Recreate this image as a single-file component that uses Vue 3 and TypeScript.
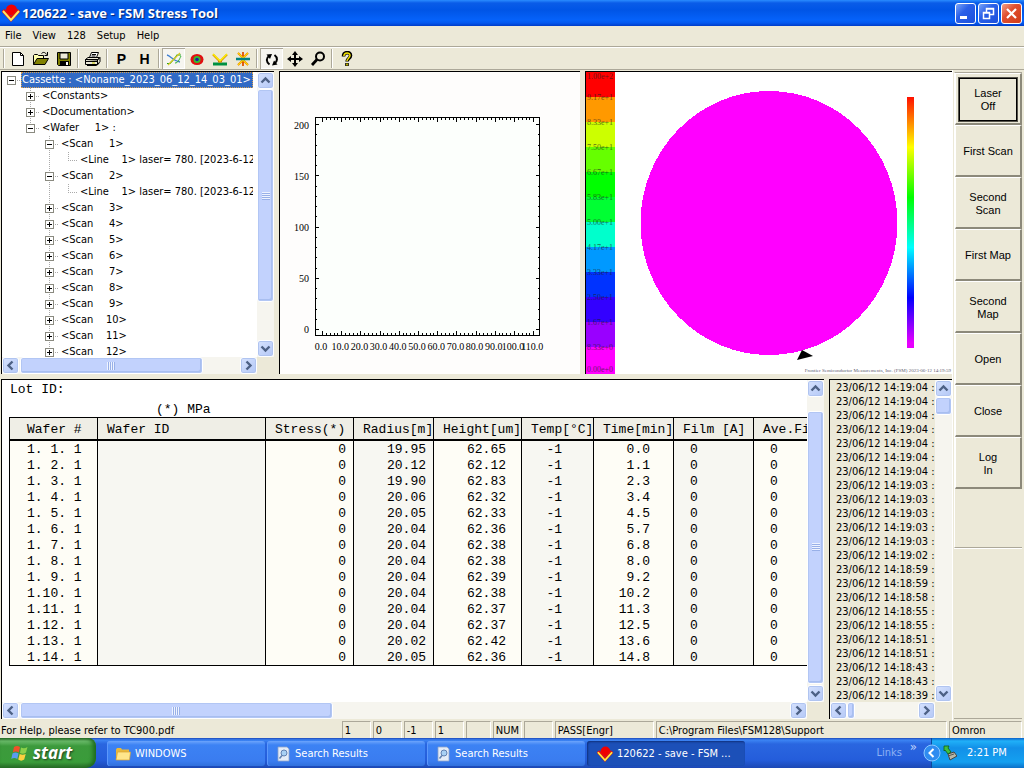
<script setup lang="ts">
import { h } from 'vue'

interface TreeRow { text: string; depth: number; box: '' | '+' | '-'; lines: string[] }
interface BarProps { dir: 'v' | 'h'; before: number; thumb: number; after: number; grip?: boolean; name: string }

const ScrollBar = (p: BarProps) => {
  const arrow = (d: string, label: string) =>
    h('button', { class: 'sb-btn', type: 'button', 'aria-label': `${p.name} ${label}` }, [
      h('svg', { viewBox: '0 0 15 15', width: 15, height: 15 }, [
        h('path', { d, fill: 'none', stroke: '#4d6185', 'stroke-width': 2.4 }),
      ]),
    ])
  const v = p.dir === 'v'
  return h('div', { class: ['sb', `sb-${p.dir}`] }, [
    arrow(v ? 'M3.5 9.5 7.5 5.5 11.5 9.5' : 'M9.5 3.5 5.5 7.5 9.5 11.5', v ? 'up' : 'left'),
    h('div', { class: 'sb-track' }, [
      h('span', { style: { flexGrow: p.before } }),
      h('span', { class: 'sb-thumb', style: { flexGrow: p.thumb } }, p.grip ? [h('i', { class: 'sb-grip' })] : []),
      h('span', { style: { flexGrow: p.after } }),
    ]),
    arrow(v ? 'M3.5 5.5 7.5 9.5 11.5 5.5' : 'M5.5 3.5 9.5 7.5 5.5 11.5', v ? 'down' : 'right'),
  ])
}
ScrollBar.props = ['dir', 'before', 'thumb', 'after', 'grip', 'name']

const menus = ['File', 'View', '128', 'Setup', 'Help']

const scanRow = (n: number, box: '+' | '-'): TreeRow => ({
  text: `<Scan    ${n < 10 ? ' ' : ''}${n}>`, depth: 2, box, lines: ['', '', 'full stub'],
})
const lineRow: TreeRow = {
  text: '<Line    1> laser= 780. [2023-6-12', depth: 3, box: '', lines: ['', '', 'full', 'half stub'],
}
const tree: TreeRow[] = [
  { text: 'Cassette : <Noname_2023_06_12_14_03_01>', depth: 0, box: '-', lines: ['stub'] },
  { text: '<Constants>', depth: 1, box: '+', lines: ['', 'full stub'] },
  { text: '<Documentation>', depth: 1, box: '+', lines: ['', 'full stub'] },
  { text: '<Wafer     1> :', depth: 1, box: '-', lines: ['', 'half stub'] },
  scanRow(1, '-'), lineRow, scanRow(2, '-'), lineRow,
  ...[3, 4, 5, 6, 7, 8, 9, 10, 11, 12].map((n) => scanRow(n, '+')),
]

const xLabels = Array.from({ length: 12 }, (_, i) => (i * 10).toFixed(1))
const xTicks = Array.from({ length: 56 }, (_, i) => ({ x: Math.round(42 + i * 3.84) + 0.5, len: i % 5 ? 3 : 5 }))
const yTicks = Array.from({ length: 21 }, (_, i) => ({ y: Math.round(257 - i * 10.25) + 0.5, len: i % 5 ? 2 : 4 }))
const yLabels = [0, 50, 100, 150, 200]

const bands = [
  ['#ff0000', '1.00e+2'], ['#ff9900', '9.17e+1'], ['#ccff00', '8.33e+1'], ['#66ff00', '7.50e+1'],
  ['#00ff00', '6.67e+1'], ['#00ff33', '5.83e+1'], ['#00ffcc', '5.00e+1'], ['#0099ff', '4.17e+1'],
  ['#0033ff', '3.33e+1'], ['#3300ff', '2.50e+1'], ['#9900ff', '1.67e+1'], ['#ff00ff', '8.33e+0'],
]

const columns = [
  { label: 'Wafer #', cls: 'c-no' }, { label: 'Wafer ID', cls: 'c-id' }, { label: 'Stress(*)', cls: 'c-stress' },
  { label: 'Radius[m]', cls: 'c-radius' }, { label: 'Height[um]', cls: 'c-height' }, { label: 'Temp[°C]', cls: 'c-temp' },
  { label: 'Time[min]', cls: 'c-time' }, { label: 'Film [A]', cls: 'c-film' }, { label: 'Ave.Film', cls: 'c-ave' },
]
const measured: [string, string, string][] = [
  ['19.95', '62.65', '0.0'], ['20.12', '62.12', '1.1'], ['19.90', '62.83', '2.3'], ['20.06', '62.32', '3.4'],
  ['20.05', '62.33', '4.5'], ['20.04', '62.36', '5.7'], ['20.04', '62.38', '6.8'], ['20.04', '62.38', '8.0'],
  ['20.04', '62.39', '9.2'], ['20.04', '62.38', '10.2'], ['20.04', '62.37', '11.3'], ['20.04', '62.37', '12.5'],
  ['20.02', '62.42', '13.6'], ['20.05', '62.36', '14.8'],
]
const rows = measured.map(([r, ht, t], i) => [
  `1.${String(i + 1).padStart(2, ' ')}. 1`, '', '0', r, ht, '-1', t, '0', '0',
])

const log = [
  '19:04', '19:04', '19:04', '19:04', '19:04', '19:04', '19:04', '19:03', '19:03', '19:03', '19:03', '19:03',
  '19:02', '18:59', '18:59', '18:58', '18:55', '18:55', '18:51', '18:51', '18:43', '18:43', '18:39',
]

const actions = ['Laser\nOff', 'First Scan', 'Second\nScan', 'First Map', 'Second\nMap', 'Open', 'Close', 'Log\nIn']
</script>

<template>
  <div class="app">
    <header class="title">
      <svg class="logo" viewBox="0 0 18 18" width="18" height="18">
        <circle cx="9.500" cy="6" r="5.500" fill="#f00000" />
        <path d="M1 6 9 15 17 6" fill="none" stroke="#e01010" stroke-width="4" />
        <path d="M1 7 9 16 17 7" fill="none" stroke="#ffe860" stroke-width="2" />
      </svg>
      <h1>120622 - save - FSM Stress Tool</h1>
      <button class="win" aria-label="Minimize"><svg viewBox="0 0 19 19"><path d="M4 13.500h7" stroke="#fff" stroke-width="3" /></svg></button>
      <button class="win" aria-label="Restore"><svg viewBox="0 0 19 19"><path d="M7.500 8V4.500h7v6H11M7 5h8" fill="none" stroke="#fff" stroke-width="1.500" /><path d="M4.500 8.500h6v6h-6zM4 9h7" fill="none" stroke="#fff" stroke-width="1.500" /></svg></button>
      <button class="win close" aria-label="Close"><svg viewBox="0 0 19 19"><path d="M5 5 14 14M14 5 5 14" stroke="#fff" stroke-width="2.200" /></svg></button>
    </header>

    <nav class="menu"><button v-for="m in menus" :key="m">{{ m }}</button></nav>

    <div class="toolbar">
      <i class="sep lead"></i>
      <button aria-label="New"><svg viewBox="0 0 16 16"><path d="M2.500 1.500h8l3 3v10h-11z" fill="#fff" stroke="#000" /><path d="M10.500 1.500v3h3" fill="none" stroke="#000" /></svg></button>
      <button aria-label="Open file"><svg viewBox="0 0 16 16"><path d="M.5 13.500v-9l1-1h3l1 1h5v3" fill="#ffffb0" stroke="#000" /><path d="M.5 13.500 4 7.500h11.500l-3.500 6z" fill="#808000" stroke="#000" /><path d="M8.500 2.500c2-2 4-1 5 1M14.500 1v3.500h-3" fill="none" stroke="#000" /></svg></button>
      <button aria-label="Save"><svg viewBox="0 0 16 16"><path d="M1.500 1.500h13v13h-12l-1-1z" fill="#808000" stroke="#000" /><path d="M4 2h8v6H4z" fill="#ece9d8" stroke="#000" /><path d="M4 10h9v4.500H4z" fill="#000" /><path d="M10 11h2v3h-2z" fill="#fff" /></svg></button>
      <i class="sep"></i>
      <button aria-label="Print"><svg viewBox="0 0 16 16"><path d="M4.500 6.500 6.500 1.500h7l-2 5" fill="#fff" stroke="#000" /><path d="M7 3.500h4M6.500 5h4" stroke="#000" /><path d="M.5 8.500l2.500-2h11.500l-2 2.500zM.5 8.500h12v5H.5zM12.500 9l2.500-2.500v4l-2.500 3" fill="#ece9d8" stroke="#000" /><path d="M.5 10.500h12M2 14.500h9.500l3-2.500" fill="none" stroke="#000" /><path d="M7 12h3" stroke="#c8c800" /></svg></button>
      <i class="sep"></i>
      <button class="letter">P</button>
      <button class="letter">H</button>
      <i class="sep"></i>
      <button class="on" aria-label="Line plot"><svg viewBox="0 0 16 16"><path d="M1 12.500h3L9 7l2-3h4" fill="none" stroke="#20a020" stroke-width="1.200" /><path d="M1 4c4 1 6 6 13 7" fill="none" stroke="#4080d0" stroke-width="1.300" /><path d="M2 14 14 2" stroke="#d8c820" stroke-width="1.200" /><path d="M9 12c3 0 4-3 6-7" fill="none" stroke="#30b030" /></svg></button>
      <button aria-label="Contour map"><svg viewBox="0 0 16 16"><ellipse cx="8" cy="8.500" rx="6.500" ry="5.500" fill="#e01010" /><circle cx="8" cy="8.500" r="3.500" fill="#30c030" /><circle cx="8" cy="8.500" r="1.800" fill="#2020a0" /></svg></button>
      <button aria-label="Reflection"><svg viewBox="0 0 16 16"><path d="M1 13h14" stroke="#009040" stroke-width="3" /><path d="M1 3.500 8 10.500 15 3.500M6 10.500h4" fill="none" stroke="#d08000" stroke-width="2" /><path d="M1 3 8 10 15 3" fill="none" stroke="#fff000" stroke-width="1.500" /></svg></button>
      <button aria-label="Intensity"><svg viewBox="0 0 16 16"><path d="M8 1v14M3 2 8 7 13 2M3 14 8 9 13 14" fill="none" stroke="#e05000" stroke-width="1.800" /><path d="M3 2 8 7 13 2M3 14 8 9 13 14" fill="none" stroke="#ffe000" stroke-width="1.300" /><path d="M1 8h14" stroke="#008080" stroke-width="2.500" /></svg></button>
      <i class="sep"></i>
      <button class="on" aria-label="Rotate"><svg viewBox="0 0 16 16"><path d="M5.500 13.500C2 11 2 7 5 5M10.500 4c3.500 2.500 3 6.500 0 8.500" fill="none" stroke="#000" stroke-width="2" /><path d="M2.500 3.500 8 3 6 8zM13.500 13.500 8 14.500 10 9.500z" /></svg></button>
      <button aria-label="Move"><svg viewBox="0 0 16 16"><path d="M8 2v12M2 8h12" stroke="#000" stroke-width="2" /><path d="M8 0 11 4H5zM8 16 5 12h6zM0 8 4 5v6zM16 8 12 11V5z" /></svg></button>
      <button aria-label="Magnify"><svg viewBox="0 0 16 16"><circle cx="10" cy="5.500" r="4" fill="none" stroke="#000" stroke-width="2" /><path d="M7 8.500 2 14" stroke="#000" stroke-width="2.800" /></svg></button>
      <i class="sep"></i>
      <button aria-label="Help"><svg viewBox="0 0 16 16"><path d="M4.500 5.500c0-5 7-5 7-1 0 3-3.500 3-3.500 6M8 12v3" fill="none" stroke="#000" stroke-width="3.600" /><path d="M4.800 5c.5-4 6.200-4 6.200-.5 0 2.500-3 3-3 5.500M8 12.500v2" fill="none" stroke="#f0e000" stroke-width="1.500" /></svg></button>
    </div>

    <main class="main">
      <div class="workspace">
        <div class="upper">
          <section class="pane tree-pane">
            <ul class="tree">
              <li v-for="(r, i) in tree" :key="i">
                <span v-for="(l, k) in r.lines" :key="k" class="cell" :class="l">
                  <svg v-if="k === r.depth && r.box" viewBox="0 0 9 9" width="9" height="9">
                    <rect x=".5" y=".5" width="8" height="8" fill="#fff" stroke="#8a8a80" />
                    <path :d="r.box === '+' ? 'M2 4.5h5M4.5 2v5' : 'M2 4.5h5'" stroke="#000" />
                  </svg>
                </span>
                <span class="node" :class="{ sel: i === 0 }">{{ r.text }}</span>
              </li>
            </ul>
            <ScrollBar dir="v" name="Tree" :before="0" :thumb="214" :after="38" :grip="true" />
            <ScrollBar dir="h" name="Tree" :before="1" :thumb="184" :after="38" :grip="true" />
          </section>

          <section class="pane plot">
            <svg viewBox="0 0 300 302">
              <rect x="35.500" y="45.500" width="224" height="218" fill="#fcfffc" stroke="#000" />
              <path v-for="t in xTicks" :key="'x' + t.x" :d="`M${t.x} 45v${t.len}M${t.x} 264v-${t.len}`" stroke="#000" />
              <path v-for="t in yTicks" :key="'y' + t.y" :d="`M35 ${t.y}h${t.len}M260 ${t.y}h-${t.len}`" stroke="#000" />
              <text v-for="(v, i) in yLabels" :key="'l' + v" x="29" :y="261 - i * 51" text-anchor="end">{{ v }}</text>
              <text v-for="(v, i) in xLabels" :key="'b' + v" :x="41 + i * 19.2" y="278" text-anchor="middle">{{ v }}</text>
            </svg>
          </section>

          <section class="pane map">
            <svg viewBox="0 0 366 302" preserveAspectRatio="xMinYMin meet">
              <defs>
                <linearGradient id="spectrum" x1="0" y1="0" x2="0" y2="1">
                  <stop offset="0" stop-color="#ff1000" /><stop offset=".2" stop-color="#ffff00" />
                  <stop offset=".4" stop-color="#00ff00" /><stop offset=".6" stop-color="#00ffff" />
                  <stop offset=".8" stop-color="#0000ff" /><stop offset=".98" stop-color="#e800ff" />
                </linearGradient>
              </defs>
              <rect v-for="(b, i) in bands" :key="b[0]" x="0" :y="i * 25" width="29" :height="i === 11 ? 27 : 25" :fill="b[0]" />
              <text v-for="(b, i) in bands" :key="b[1]" class="scale" x="1" :y="i ? i * 25 + 3 : 7">{{ b[1] }}</text>
              <text class="scale" x="1" y="300">0.00e+0</text>
              <ellipse cx="183" cy="151" rx="128.500" ry="132" fill="#ff00ff" shape-rendering="crispEdges" />
              <rect x="321" y="25" width="7" height="251" fill="url(#spectrum)" />
              <path d="M211 288 216 278 227 284z" />
              <text class="credit" x="365" y="300" text-anchor="end">Frontier Semiconductor Measurements, Inc. (FSM) 2023-06-12 14:19:59</text>
            </svg>
          </section>
        </div>

        <div class="lower">
          <section class="pane results">
            <div class="sheet">
              <p>Lot ID:</p>
              <p class="unit">(*) MPa</p>
              <table>
                <colgroup><col v-for="c in columns" :key="c.cls" :class="c.cls" /></colgroup>
                <thead><tr><th v-for="c in columns" :key="c.cls" scope="col">{{ c.label }}</th></tr></thead>
                <tbody>
                  <tr v-for="(r, i) in rows" :key="i"><td v-for="(v, k) in r" :key="k" :class="columns[k].cls">{{ v }}</td></tr>
                </tbody>
              </table>
            </div>
            <ScrollBar dir="v" name="Results" :before="14" :thumb="274" :after="1" :grip="true" />
            <ScrollBar dir="h" name="Results" :before="1" :thumb="312" :after="459" :grip="true" />
          </section>

          <section class="pane log">
            <ol><li v-for="(t, i) in log" :key="i">23/06/12 14:{{ t }} :</li></ol>
            <ScrollBar dir="v" name="Log" :before="0" :thumb="16" :after="272" />
            <ScrollBar dir="h" name="Log" :before="0" :thumb="7" :after="68" />
          </section>
        </div>
      </div>

      <aside class="side">
        <div class="actions">
          <button v-for="(a, i) in actions" :key="a" :class="{ focus: i === 0 }"><span>{{ a }}</span></button>
        </div>
        <div class="blank"></div>
      </aside>
    </main>

    <footer class="status">
      <span class="hint">For Help, please refer to TC900.pdf</span>
      <span class="s-num">1</span><span class="s-num">0</span><span class="s-num">-1</span><span class="s-num">1</span>
      <span class="s-key"></span><span class="s-num">NUM</span><span class="s-num"></span>
      <span class="s-user">PASS[Engr]</span><span class="s-path">C:\Program Files\FSM128\Support</span><span class="s-plc">Omron</span>
    </footer>

    <div class="taskbar">
      <button class="start">
        <svg viewBox="0 0 18 18" width="18" height="18">
          <path d="M3 3c2-1.500 4-1.500 6 0L7.800 8.500c-2-1.500-4-1.500-6 0z" fill="#f0502a" />
          <path d="M10 3.500c2 1 4 1 6.500-.5L15 8.500c-2 1.500-4 1.500-6 .5z" fill="#8cd04a" />
          <path d="M1.500 9.500c2-1.500 4-1.500 6 0L6.300 15c-2-1.500-4-1.500-6 0z" fill="#5a9cf0" />
          <path d="M8.700 10c2 1 4 1 6 0l-1.500 5.500c-2 1.500-4 1.500-6 0z" fill="#fcd040" />
        </svg>start
      </button>
      <div class="tasks">
        <button class="task"><svg viewBox="0 0 16 16" width="16" height="16"><path d="M1 3.500l1-1.500h4l1 1.500h7V14H1z" fill="#e8b83c" /><path d="M1 14 2.500 6H15.500L14.500 14z" fill="#ffe68c" stroke="#d8a030" stroke-width=".7" /></svg>WINDOWS</button>
        <button v-for="n in 2" :key="n" class="task"><svg viewBox="0 0 16 16" width="16" height="16"><path d="M3 1h9l2 2v12H3z" fill="#e4ecf8" stroke="#90a4c8" stroke-width=".8" /><circle cx="9" cy="7" r="3" fill="#a8d0f4" stroke="#6080b0" /><path d="M7 9.500 4.500 12.500" stroke="#6080b0" stroke-width="1.500" /></svg>Search Results</button>
        <button class="task active"><svg viewBox="0 0 18 18" width="16" height="16"><circle cx="9.500" cy="6" r="5.500" fill="#f00000" /><path d="M1 6 9 15 17 6" fill="none" stroke="#e01010" stroke-width="4" /><path d="M1 7 9 16 17 7" fill="none" stroke="#fff040" stroke-width="2" /></svg>120622 - save - FSM ...</button>
      </div>
      <span class="links">Links</span><span class="more">»</span>
      <div class="tray">
        <button class="chev" aria-label="Show hidden icons"><svg viewBox="0 0 18 18" width="18" height="18"><circle cx="9" cy="9" r="8" fill="#2f8cf0" stroke="#8cc8ff" /><path d="M10.500 5 6.500 9l4 4" fill="none" stroke="#fff" stroke-width="2" /></svg></button>
        <svg viewBox="0 0 14 16" width="14" height="16"><path d="M5 9l6-2 3 4-7 4z" fill="#b8b8a8" stroke="#444" /><path d="M5 11l6-2" stroke="#555" /><path d="M1 1h5l-1 2 3 4-3 2-3-4-1 1z" fill="#40c040" stroke="#106010" stroke-width=".8" /></svg>
        <time>2:21 PM</time>
      </div>
    </div>
  </div>
</template>

<style>
html, body { height: 100%; overflow: hidden; }
.sb { display: flex; background: #f6f5ef; min-width: 0; min-height: 0; }
.sb-v { flex-direction: column; width: 17px; grid-column: 2; grid-row: 1; }
.sb-h { height: 17px; grid-column: 1; grid-row: 2; }
.sb-btn { flex: none; width: 17px; height: 17px; padding: 0; border: 1px solid #fff; border-radius: 3px; background: linear-gradient(135deg, #d6e2fe, #b4c8f6); box-shadow: inset 0 0 0 1px #b0c4f0; display: flex; align-items: center; justify-content: center; overflow: hidden; }
.sb-btn svg { flex: none; }
.sb-track { flex: 1; display: flex; min-width: 0; min-height: 0; }
.sb-v .sb-track { flex-direction: column; }
.sb-track > span { flex-basis: 0; flex-shrink: 1; }
.sb-thumb { box-sizing: border-box; border: 1px solid #fff; border-radius: 3px; background: #c2d2fd; box-shadow: inset 0 0 0 1px #b2c6f4, inset -2px -2px 0 #a8bef0; display: flex; align-items: center; justify-content: center; }
.sb-grip { width: 8px; height: 8px; }
.sb-v .sb-grip { background: repeating-linear-gradient(to bottom, #eef3ff 0 1px, #98b0e8 1px 2px); }
.sb-h .sb-grip { background: repeating-linear-gradient(to right, #eef3ff 0 1px, #98b0e8 1px 2px); }
</style>

<style scoped>
.app { height: 100vh; display: flex; flex-direction: column; overflow: hidden; background: #ece9d8; color: #000; font: 11px/14px "DejaVu Sans Condensed", "DejaVu Sans", sans-serif; }
button { font: inherit; color: inherit; border: 0; background: none; padding: 0; margin: 0; }
ul, ol, p, h1 { margin: 0; padding: 0; list-style: none; font: inherit; }

.title { flex: none; height: 26px; display: flex; align-items: center; gap: 2px; padding: 0 2px; background: linear-gradient(#2a8cff 0, #0a5ce8 3px, #0055e6 10px, #0562fa 20px, #0458ee 23px, #003cc8 26px); }
.logo { flex: none; }
.title h1 { flex: 1; color: #fff; font: bold 13px/20px "Open Sans", "Noto Sans", sans-serif; text-shadow: 1px 1px 1px #0a246a; white-space: nowrap; }
.win { width: 21px; height: 21px; border: 1px solid #fff; border-radius: 3px; background: linear-gradient(135deg, #7aa4f8, #2a60e8 40%, #1c50dc); }
.win svg { display: block; width: 19px; height: 19px; }
.win.close { background: linear-gradient(135deg, #f0a088, #e05030 40%, #d03c18); }

.menu { flex: none; height: 20px; display: flex; align-items: center; gap: 11px; padding: 0 5px; border-bottom: 1px solid #aca899; }
.toolbar { flex: none; height: 23px; display: flex; align-items: center; border-top: 1px solid #fff; border-bottom: 1px solid #aca899; box-sizing: border-box; padding-left: 3px; }
.toolbar button { width: 23px; height: 21px; display: flex; align-items: center; justify-content: center; }
.toolbar svg { width: 16px; height: 16px; }
.toolbar .letter { font: bold 14px/20px "Liberation Sans", Arial, sans-serif; }
.toolbar .on { background: #f6f5f0; box-shadow: inset 1px 1px 0 #aca899, inset -1px -1px 0 #fff; }
.sep { width: 1px; height: 19px; margin: 0 2px; background: #aca899; border-right: 1px solid #fff; }
.sep.lead { margin: 0 1px 0 0; }

.main { flex: 1; min-height: 0; display: grid; grid-template-columns: minmax(0, 1fr) 72px; }
.workspace { min-height: 0; display: grid; grid-template-rows: minmax(0, 303fr) minmax(0, 340fr); gap: 5px; padding: 1px 0 2px 1px; }
.upper { display: grid; min-height: 0; gap: 5px; grid-template-columns: minmax(0, 273fr) minmax(0, 301fr) minmax(0, 367fr); }
.lower { display: grid; min-height: 0; gap: 5px; grid-template-columns: minmax(0, 823fr) minmax(0, 123fr); }
.pane { min-width: 0; min-height: 0; overflow: hidden; box-sizing: border-box; border-top: 1px solid #000; border-left: 1px solid #000; background: #fff; }
.tree-pane, .results, .log { display: grid; grid-template-columns: minmax(0, 1fr) 17px; grid-template-rows: minmax(0, 1fr) 17px; background: #ece9d8; }

.tree { background: #fff; overflow: hidden; padding-right: 4px; }
.tree li { display: flex; height: 16px; line-height: 16px; overflow: hidden; }
.cell { flex: none; width: 19px; height: 16px; display: flex; align-items: center; justify-content: center; background-repeat: no-repeat; }
.stub { background-image: repeating-linear-gradient(to right, #aaa 0 1px, transparent 1px 2px); background-position: 9px 8px; background-size: 10px 1px; background-repeat: no-repeat; }
.full { background-image: repeating-linear-gradient(to bottom, #aaa 0 1px, transparent 1px 2px); background-position: 9px 0; background-size: 1px 16px; }
.full.stub, .half.stub { background-image: repeating-linear-gradient(to bottom, #aaa 0 1px, transparent 1px 2px), repeating-linear-gradient(to right, #aaa 0 1px, transparent 1px 2px); background-position: 9px 0, 9px 8px; background-size: 1px 16px, 10px 1px; }
.half.stub { background-size: 1px 8px, 10px 1px; }
.node { white-space: pre; padding-left: 2px; overflow: hidden; }
.node.sel { flex: 1; padding-left: 1px; color: #fff; background: #316ac5; outline: 1px dotted #d8a050; outline-offset: -1px; }

.plot { background: #fefdfc; }
.plot svg, .map svg { display: block; width: 100%; height: 100%; }
.plot text { font: 10px "Liberation Serif", "Times New Roman", serif; }
.map .scale { font: 8px "Liberation Serif", "Times New Roman", serif; fill: #202020; opacity: .65; }
.map .credit { font: 5px "Liberation Serif", "Times New Roman", serif; fill: #606070; }

.sheet { background: #fff; overflow: hidden; padding: 1px 0 0 7px; font: 13px/16px "Liberation Mono", "Courier New", monospace; }
.sheet p { white-space: pre; line-height: 18px; padding-left: 1px; }
.sheet .unit { padding: 2px 0 0 147px; }
table { table-layout: fixed; width: 825px; border-collapse: collapse; border: 1px solid #000; margin-top: -2px; }
th { height: 19px; padding: 2px 0 0 9px; text-align: left; font-weight: normal; background: #efeee6; border-left: 1px solid #000; border-bottom: 2px solid #000; white-space: pre; }
td { height: 14px; line-height: 14px; padding: 2px 0 0; border-left: 1px solid #000; white-space: pre; background: #fefdf6; }
td:nth-child(even) { background: #f7f7f2; }
col.c-no, col.c-stress, col.c-height { width: 88px; }
col.c-id { width: 168px; }
col.c-radius, col.c-time, col.c-film { width: 80px; }
col.c-temp { width: 72px; }
td.c-no { padding-left: 17px; }
th:first-child { padding-left: 17px; }
td.c-stress, td.c-radius { text-align: right; padding-right: 7px; }
td.c-height { text-align: right; padding-right: 15px; }
td.c-temp { text-align: right; padding-right: 31px; }
td.c-time { text-align: right; padding-right: 23px; }
td.c-film, td.c-ave { padding-left: 16px; }

.log ol { overflow: hidden; padding: 1px 0 0 6px; }
.log li { height: 14px; line-height: 14px; white-space: nowrap; }

.side { display: flex; flex-direction: column; border-left: 1px solid #fff; padding: 2px 2px 2px 1px; }
.actions { display: flex; flex-direction: column; min-height: 474px; border-bottom: 1px solid #aca899; border-top: 1px solid #aca899; border-left: 1px solid #fff; }
.actions button { height: 52px; flex: none; padding: 4px 3px 2px; border-top: 1px solid #fff; border-left: 1px solid #fff; border-right: 2px solid #8c897a; border-bottom: 2px solid #8c897a; white-space: pre-line; font: 11px/13px "Liberation Sans", Arial, sans-serif; display: flex; }
.actions span { flex: 1; align-self: stretch; display: flex; align-items: center; justify-content: center; text-align: center; }
.actions .focus span { border: 1px solid #000; outline: 1px solid #55534a; }
.blank { flex: 1; border-top: 1px solid #fff; border-bottom: 1px solid #aca899; }

.status { flex: none; height: 17px; display: flex; gap: 2px; padding-right: 2px; line-height: 17px; white-space: nowrap; }
.status span { box-sizing: border-box; overflow: hidden; padding-left: 2px; border-top: 1px solid #aca899; border-left: 1px solid #aca899; border-right: 1px solid #fff; }
.status .hint { flex: 342 1 0; border: 0; padding-left: 1px; padding-top: 1px; }
.s-num { width: 29px; }
.s-key { width: 25px; }
.s-user { width: 99px; }
.status .s-path { flex: 290 1 0; }
.s-plc { width: 73px; }

.taskbar { flex: none; height: 30px; display: flex; align-items: stretch; color: #fff; background: linear-gradient(#1c48b8 0, #3c84f4 2px, #2a66e0 6px, #245ddb 22px, #1c48b4 30px); }
.start { width: 96px; flex: none; display: flex; align-items: center; gap: 4px; padding-left: 11px; border-radius: 0 8px 10px 0; background: linear-gradient(#2a6a2a 0, #6cbc6c 3px, #3c9a3c 8px, #3a9c3a 24px, #2a6e2a 30px); box-shadow: inset -3px 0 4px #1e6a1e; font: italic bold 17px/24px "Open Sans", "Noto Sans", sans-serif; text-shadow: 1px 1px 2px #204020; }
.tasks { flex: 1; display: flex; gap: 2px; padding: 3px 0 2px 11px; min-width: 0; }
.task { flex: 0 1 158px; display: flex; align-items: center; gap: 4px; padding-left: 8px; border-radius: 3px; background: linear-gradient(#6ca4fc 0, #3c82f4 4px, #3a7cf0 20px, #3070dc); box-shadow: inset 1px 0 0 #5c98fc; white-space: nowrap; overflow: hidden; }
.task.active { background: #1c50b8; box-shadow: inset 1px 1px 2px #10307c; padding-left: 10px; }
.links { align-self: center; color: #8cb0f4; }
.more { margin: 2px 14px 0 8px; font-size: 13px; color: #c0d4fc; }
.tray { flex: none; width: 93px; display: flex; align-items: center; background: linear-gradient(#0c60c8 0, #20b0f8 3px, #1290e8 10px, #14a0f0 24px, #0c70c8 30px); border-left: 1px solid #0a4a9a; box-sizing: border-box; }
.chev { height: 18px; margin-left: -9px; margin-right: 2px; }
.tray time { margin-left: 10px; white-space: nowrap; }
</style>
